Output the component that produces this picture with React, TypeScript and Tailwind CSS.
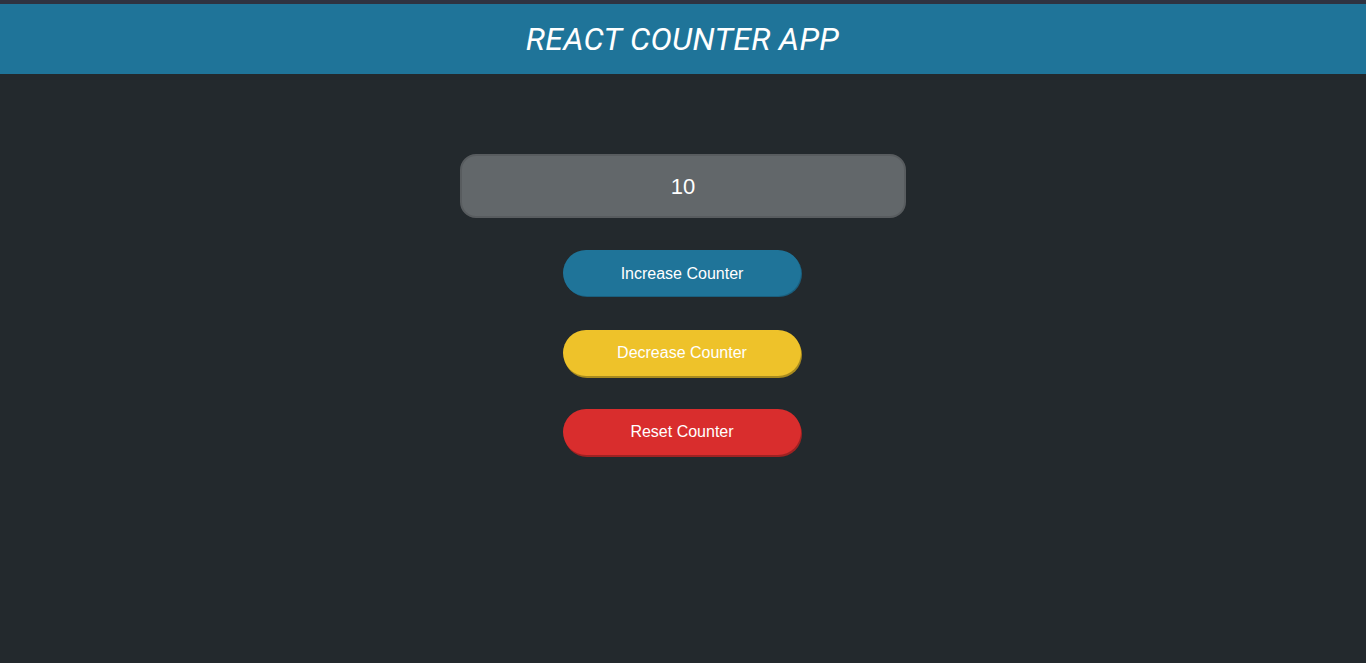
import React, { useState } from "react";

export default function App() {
    const [count, setCount] = useState(10);

    return (
        <div className="min-h-[663px] bg-[#23292d] font-['Liberation_Sans',Arial,sans-serif]">
            <div className="h-1 bg-[#2f3341]" />
            <header className="h-[70px] bg-[#1f7499] flex items-center justify-center">
                <h1 className="text-white italic text-[32px] font-['Roboto',sans-serif] tracking-[0.3px] translate-x-[-0.5px]">
                    REACT COUNTER APP
                </h1>
            </header>
            <main className="flex flex-col items-center pt-[80px]">
                <div className="w-[446px] h-[64px] rounded-[16px] bg-[#62676a] border-2 border-[#585c5f] flex items-center justify-center text-white text-[22px]">
                    {count}
                </div>
                <div className="flex flex-col items-center mt-8">
                    <button
                        onClick={() => setCount(count + 1)}
                        className="w-[238px] h-[46px] -translate-x-px rounded-full bg-[#1f7499] text-white text-base pt-px shadow-[1px_1px_0_#1a5f7e]"
                    >
                        Increase Counter
                    </button>
                    <button
                        onClick={() => setCount(count - 1)}
                        className="mt-[34px] w-[238px] h-[46px] -translate-x-px rounded-full bg-[#eec22a] text-white text-base shadow-[1px_2px_0_#a88a1e]"
                    >
                        Decrease Counter
                    </button>
                    <button
                        onClick={() => setCount(0)}
                        className="mt-[33px] w-[238px] h-[46px] -translate-x-px rounded-full bg-[#d92d2d] text-white text-base shadow-[1px_2px_0_#9e2222]"
                    >
                        Reset Counter
                    </button>
                </div>
            </main>
        </div>
    );
}
